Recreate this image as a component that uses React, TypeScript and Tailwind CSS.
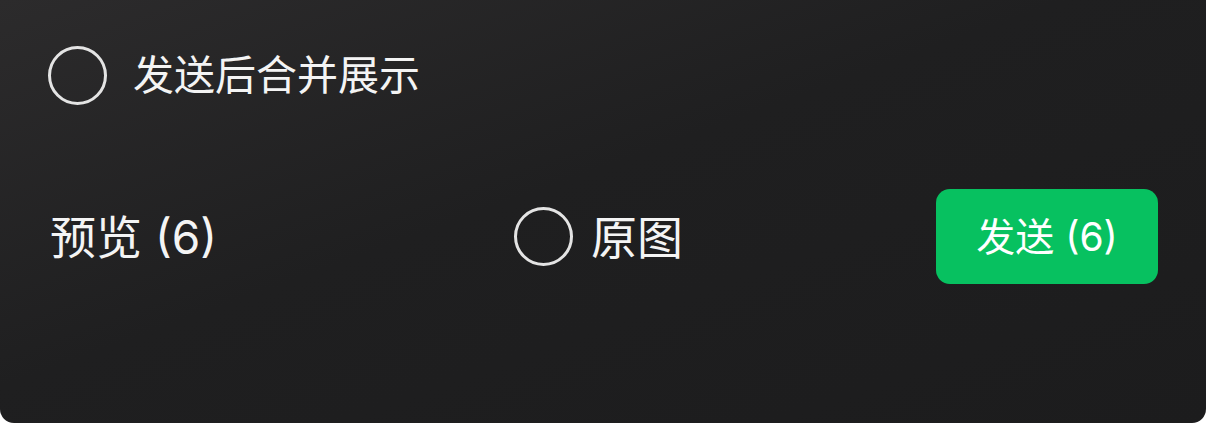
export default function App() {
  const font = { fontFamily: 'Inter, "Noto Sans CJK SC", sans-serif' };
  return (
    <div className="w-[1206px] h-[423px] bg-white">
      <div
        className="w-full h-full rounded-b-[14px] bg-[linear-gradient(160deg,#2c2b2c_0%,#1f1f20_45%,#1c1c1d_100%)] px-[48px] pt-[46px] text-[#f4f4f4]"
        style={font}
      >
        <div className="flex items-center h-[58px]">
          <div className="w-[59px] h-[59px] rounded-full border-[3px] border-[#e4e4e4] shrink-0" />
          <span className="ml-[26px] text-[41px] leading-none tracking-[0px]">发送后合并展示</span>
        </div>

        <div className="mt-[85px] grid grid-cols-[466px_1fr_auto] items-center h-[95px]">
          <span className="text-[46px] leading-none pl-[2px]">预览 (6)</span>
          <div className="flex items-center">
            <div className="w-[59px] h-[59px] rounded-full border-[3px] border-[#e4e4e4] shrink-0" />
            <span className="ml-[18px] text-[46px] leading-none">原图</span>
          </div>
          <button
            type="button"
            className="w-[222px] h-[95px] rounded-[14px] bg-[#07c160] text-white text-[39px] leading-none flex items-center justify-center"
          >
            发送 (6)
          </button>
        </div>
      </div>
    </div>
  );
}
